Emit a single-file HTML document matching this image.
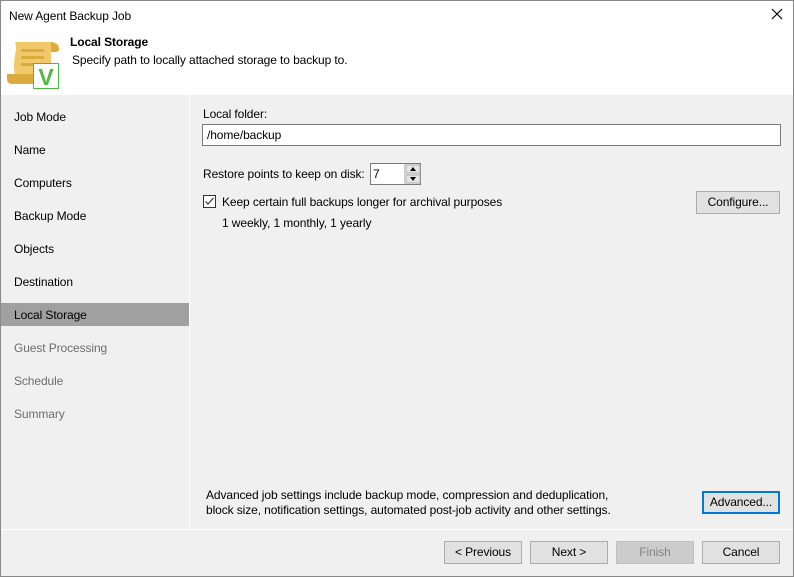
<!DOCTYPE html>
<html><head><meta charset="utf-8"><style>
*{margin:0;padding:0;box-sizing:border-box}
body{width:794px;height:577px;overflow:hidden;background:#f0f0f0;font-family:"Liberation Sans",sans-serif;font-size:12px;color:#000;position:relative;letter-spacing:-0.1px}
.win{position:absolute;left:0;top:0;width:794px;height:577px;border:1px solid #888;}
.a{position:absolute;white-space:nowrap}
.hdr{position:absolute;left:1px;top:1px;width:792px;height:94px;background:#fff}
.nav{position:absolute;left:14px}
.dis{color:#6d6d6d}
.btn{position:absolute;height:23px;border:1px solid #adadad;background:#e1e1e1;text-align:center;line-height:21px}
</style></head><body>
<div class="win"></div>
<div class="hdr"></div>
<div class="a" style="left:9px;top:9px">New Agent Backup Job</div>
<svg class="a" style="left:771px;top:8px" width="12" height="12"><path d="M1 1L11 11M11 1L1 11" stroke="#000" stroke-width="1.2"/></svg>
<svg class="a" style="left:0;top:35px" width="65" height="60">
<path d="M15 7H53Q59 8 59 13Q59 17 55 17H51V41H15Q13 30 15 20Q17 12 15 7Z" fill="#f2c96a"/>
<path d="M51 7Q58 9 59 14Q59 17 55 17H51Z" fill="#dcab3e"/>
<rect x="21" y="14" width="23" height="3" fill="#dcab3e"/><rect x="21" y="21" width="23" height="3" fill="#dcab3e"/><rect x="21" y="28" width="23" height="3" fill="#dcab3e"/>
<path d="M7 39H34V49H11Q7 48 7 44Z" fill="#dcab3e"/>
<rect x="33.5" y="28.5" width="25" height="25" fill="#fff" stroke="#52b845" stroke-width="1"/>
<text x="46" y="50" font-family="Liberation Sans" font-weight="bold" font-size="23" fill="#52b845" text-anchor="middle">V</text>
</svg>
<div class="a" style="left:70px;top:35px;font-weight:bold">Local Storage</div>
<div class="a" style="left:72px;top:53px">Specify path to locally attached storage to backup to.</div>
<div class="a" style="left:189px;top:95px;width:1px;height:434px;background:#fff"></div>
<div class="nav a" style="top:110px">Job Mode</div>
<div class="nav a" style="top:143px">Name</div>
<div class="nav a" style="top:176px">Computers</div>
<div class="nav a" style="top:209px">Backup Mode</div>
<div class="nav a" style="top:242px">Objects</div>
<div class="nav a" style="top:275px">Destination</div>
<div class="a" style="left:1px;top:303px;width:188px;height:23px;background:#a0a0a0"></div>
<div class="nav a" style="top:308px">Local Storage</div>
<div class="nav a dis" style="top:341px">Guest Processing</div>
<div class="nav a dis" style="top:374px">Schedule</div>
<div class="nav a dis" style="top:407px">Summary</div>
<div class="a" style="left:203px;top:107px">Local folder:</div>
<div class="a" style="left:202px;top:124px;width:579px;height:22px;background:#fff;border:1px solid #7a7a7a;padding:3px 4px">/home/backup</div>
<div class="a" style="left:203px;top:167px">Restore points to keep on disk:</div>
<div class="a" style="left:370px;top:163px;width:51px;height:22px;background:#fff;border:1px solid #7a7a7a;padding:3px 2px">7</div>
<div class="a" style="left:404px;top:164px;width:16px;height:20px;background:#f0f0f0;border-left:1px solid #ccc">
<svg width="16" height="20"><rect x="1" y="1" width="14" height="8" fill="#e5e5e5" stroke="#adadad"/><rect x="1" y="11" width="14" height="8" fill="#e5e5e5" stroke="#adadad"/><path d="M5 7L8 3L11 7Z M5 13L8 17L11 13Z" fill="#000"/></svg></div>
<svg class="a" style="left:203px;top:195px" width="13" height="13"><rect x="0.5" y="0.5" width="12" height="12" fill="#fff" stroke="#333"/><path d="M2.5 6.5L5 9L10.5 3" stroke="#333" stroke-width="1.2" fill="none"/></svg>
<div class="a" style="left:222px;top:195px">Keep certain full backups longer for archival purposes</div>
<div class="btn" style="left:696px;top:191px;width:84px">Configure...</div>
<div class="a" style="left:222px;top:216px">1 weekly, 1 monthly, 1 yearly</div>
<div class="a" style="left:206px;top:488px">Advanced job settings include backup mode, compression and deduplication,</div>
<div class="a" style="left:206px;top:503px">block size, notification settings, automated post-job activity and other settings.</div>
<div class="btn" style="left:702px;top:491px;width:78px;border:2px solid #0078d7;line-height:19px">Advanced...</div>
<div class="a" style="left:1px;top:529px;width:792px;height:1px;background:#fff"></div>
<div class="btn" style="left:444px;top:541px;width:78px">&lt; Previous</div>
<div class="btn" style="left:530px;top:541px;width:78px">Next &gt;</div>
<div class="btn" style="left:616px;top:541px;width:78px;background:#cccccc;border-color:#bfbfbf;color:#838383">Finish</div>
<div class="btn" style="left:702px;top:541px;width:78px">Cancel</div>
</body></html>
